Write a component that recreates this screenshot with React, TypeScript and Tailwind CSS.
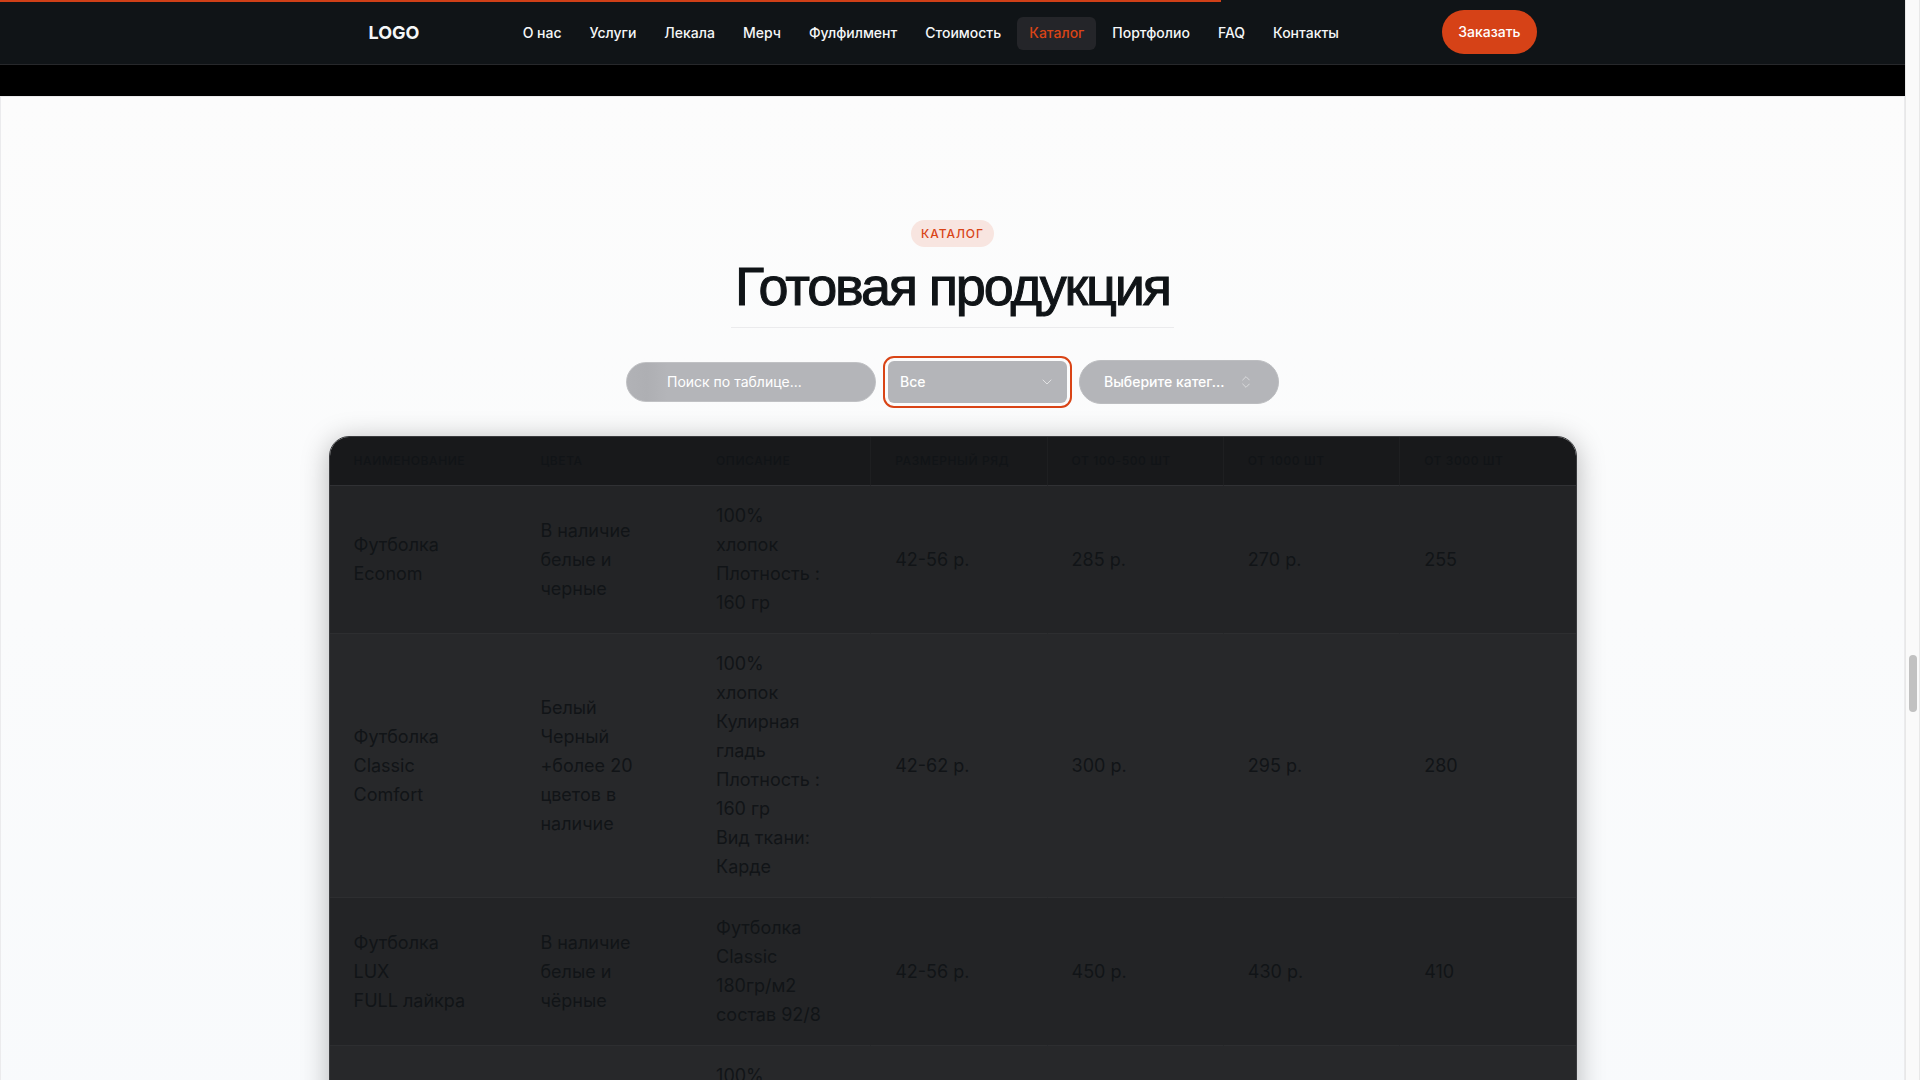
import React from "react";
import { ChevronDown, ChevronsUpDown } from "lucide-react";

const navItems = [
  "О нас",
  "Услуги",
  "Лекала",
  "Мерч",
  "Фулфилмент",
  "Стоимость",
  "Каталог",
  "Портфолио",
  "FAQ",
  "Контакты",
];

const columns = [
  "Наименование",
  "Цвета",
  "Описание",
  "Размерный ряд",
  "От 100-500 шт",
  "От 1000 шт",
  "От 3000 шт",
];

const rows: string[][] = [
  ["Футболка\nEconom", "В наличие\nбелые и\nчерные", "100%\nхлопок\nПлотность :\n160 гр", "42-56 р.", "285 р.", "270 р.", "255"],
  [
    "Футболка\nClassic\nComfort",
    "Белый\nЧерный\n+более 20\nцветов в\nналичие",
    "100%\nхлопок\nКулирная\nгладь\nПлотность :\n160 гр\nВид ткани:\nКарде",
    "42-62 р.",
    "300 р.",
    "295 р.",
    "280",
  ],
  ["Футболка\nLUX\nFULL лайкра", "В наличие\nбелые и\nчёрные", "Футболка\nClassic\n180гр/м2\nсостав 92/8", "42-56 р.", "450 р.", "430 р.", "410"],
  ["", "", "100%\nхлопок\n", "", "", "", ""],
];

function Header() {
  return (
    <header className="relative shrink-0 border-b border-[#27282b] bg-[#101417]">
      <div className="absolute left-0 top-0 h-0.5 w-[64.1%] bg-[#d04018]" />
      <div className="mx-auto flex h-16 max-w-[1200px] items-center justify-between px-4">
        <a href="#" className="pt-0.5 text-lg font-bold text-[#f5f7f8]">
          LOGO
        </a>
        <nav className="flex items-center gap-1 pt-0.5">
          {navItems.map((item) => (
            <a
              key={item}
              href="#"
              className={
                item === "Каталог"
                  ? "rounded-md bg-[#242529] px-3 pt-1.5 pb-[7px] text-sm font-medium text-[#d94416]"
                  : "rounded-md px-3 pt-1.5 pb-[7px] text-sm font-medium text-[#f5f7f8]"
              }
            >
              {item}
            </a>
          ))}
        </nav>
        <button className="h-11 rounded-full bg-[#d64217] px-4 text-sm font-medium text-white">Заказать</button>
      </div>
    </header>
  );
}

function Filters() {
  return (
    <div className="mt-8 flex items-center justify-center gap-3">
      <input
        type="text"
        aria-label="Поиск по таблице"
        placeholder="Поиск по таблице..."
        className="h-10 w-[250px] rounded-full border border-[#c0c1c4] bg-[linear-gradient(90deg,#b1b2b6_0,#aeafb3_20px,#b4b5b9_40px)] pb-0.5 pl-10 text-sm text-white placeholder:text-white"
      />
      <div className="relative w-[179px]">
        <select
          aria-label="Категория"
          className="block h-[42px] w-full appearance-none rounded-md bg-[#b4b5b9] px-3 text-sm font-medium text-white outline-2 outline-offset-3 outline-[#d94416]"
        >
          <option>Все</option>
        </select>
        <ChevronDown className="pointer-events-none absolute right-3 top-[13px] size-4 text-white/60" strokeWidth={1.5} />
      </div>
      <button className="flex h-11 w-[200px] items-center justify-between rounded-full border border-[#bcbdc0] bg-[#b4b5b9] px-6 text-sm font-medium text-white">
        <span>Выберите катег...</span>
        <ChevronsUpDown className="size-4 shrink-0 opacity-50" strokeWidth={1.5} />
      </button>
    </div>
  );
}

function PriceTable() {
  return (
    <div className="mx-auto mt-8 max-w-[1280px] px-4">
      <div className="overflow-hidden rounded-[20px] border border-[#3a3b3e] shadow-[0_4px_28px_rgba(0,0,0,0.28)]">
        <table className="w-full table-fixed border-separate border-spacing-0 text-left text-[#111417]">
          <colgroup>
            <col className="w-[15%]" />
            <col className="w-[14.1%]" />
            <col className="w-[14.3%]" />
            <col />
            <col />
            <col />
            <col />
          </colgroup>
          <thead>
            <tr className="bg-[#18191b]">
              {columns.map((title, i) => (
                <th
                  key={title}
                  scope="col"
                  className={
                    i > 2
                      ? "h-[49px] border-b border-l border-b-[#303134] border-l-[#1e1f21] px-6 text-xs font-medium tracking-wider whitespace-nowrap uppercase"
                      : "h-[49px] border-b border-b-[#303134] px-6 text-xs font-medium tracking-wider whitespace-nowrap uppercase"
                  }
                >
                  {title}
                </th>
              ))}
            </tr>
          </thead>
          <tbody>
            {rows.map((row, r) => (
              <tr key={r} className="odd:bg-[#232426] even:bg-[#27282a]">
                {row.map((cell, c) => (
                  <td
                    key={c}
                    className={
                      c > 2
                        ? "border-b border-l border-b-[#2d2e30] border-l-transparent px-6 pt-[15px] pb-4 text-lg leading-[29px] whitespace-pre"
                        : "border-b border-b-[#2d2e30] px-6 pt-[15px] pb-4 text-lg leading-[29px] whitespace-pre"
                    }
                  >
                    {cell}
                  </td>
                ))}
              </tr>
            ))}
          </tbody>
        </table>
      </div>
    </div>
  );
}

export default function App() {
  return (
    <div className="flex h-screen overflow-hidden bg-[#fafafa] font-['Inter',sans-serif]">
      <div className="flex min-w-0 flex-1 flex-col overflow-hidden">
        <Header />
        <div className="h-[31px] shrink-0 bg-black" />
        <main className="flex-1 border border-b-0 border-[#ebebed] bg-linear-to-b from-[#fcfcfc] to-[#f8fafc]">
          <section className="pt-[123px]">
            <div className="flex flex-col items-center">
              <span className="rounded-full bg-[#f8e5e0] px-2.5 py-1 text-xs leading-[19px] font-medium tracking-[0.08em] text-[#d94416] uppercase">
                Каталог
              </span>
              <h2 className="mt-2 border-b border-[#ebebed] px-1 pb-2.5 font-['Liberation_Sans',sans-serif] text-[54px] leading-[62px] tracking-[-0.04em] text-[#101417] [-webkit-text-stroke:1px_#101417]">
                Готовая продукция
              </h2>
            </div>
            <Filters />
            <PriceTable />
          </section>
        </main>
      </div>
      <div className="w-[15px] shrink-0 border-x border-[#e8e8e8] bg-[#fafafa] pt-[655px]">
        <div className="mx-auto h-[57px] w-2 rounded-full bg-[#c1c1c1]" />
      </div>
    </div>
  );
}
